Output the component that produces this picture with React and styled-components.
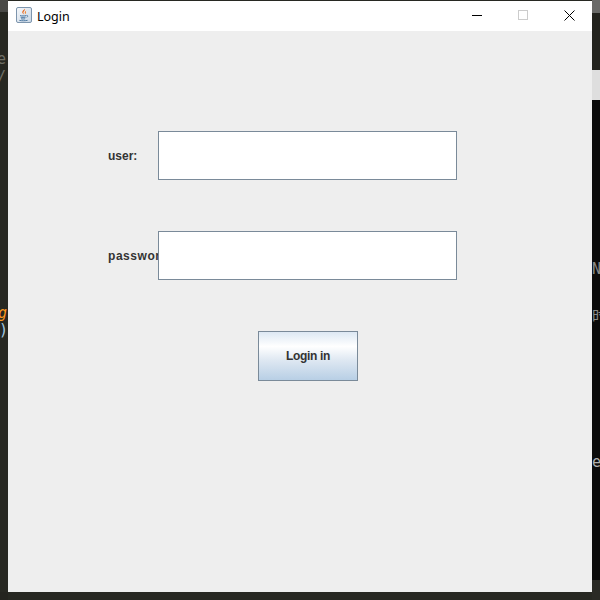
import React from 'react';
import styled, { createGlobalStyle } from 'styled-components';

const GlobalStyle = createGlobalStyle`
  html, body {
    margin: 0;
    padding: 0;
    width: 600px;
    height: 600px;
    overflow: hidden;
    background: #272822;
  }
`;

const Desktop = styled.div`
  width: 600px;
  height: 600px;
  display: grid;
  grid-template-columns: 8px 584px 8px;
  grid-template-rows: 600px;
  overflow: hidden;
  background: #272822;
`;

const LeftEditor = styled.div`
  display: flex;
  flex-direction: column;
  background: linear-gradient(#4a4a47 0 12px, #272822 12px 592px, #24241f 592px);
  overflow: hidden;
`;

const RightEditor = styled.div`
  display: flex;
  flex-direction: column;
  background: linear-gradient(
    #6a6a68 0 13px,
    #23231e 13px 70px,
    #dedede 70px 100px,
    #0c0c0c 100px 580px,
    #2a2a25 580px
  );
  overflow: hidden;
`;

const Glyph = styled.span`
  display: block;
  height: 18px;
  line-height: 18px;
  margin-top: ${(p) => p.$top}px;
  margin-left: ${(p) => p.$left || 0}px;
  font-family: "DejaVu Sans Mono", "Noto Sans CJK SC", monospace;
  font-size: 15px;
  font-style: ${(p) => (p.$italic ? 'italic' : 'normal')};
  color: ${(p) => p.$color};
  white-space: nowrap;
`;

const Frame = styled.div`
  margin-top: 1px;
  height: 591px;
  display: flex;
  flex-direction: column;
  background: #eeeeee;
`;

const TitleBar = styled.div`
  height: 30px;
  flex: none;
  display: flex;
  align-items: center;
  background: #ffffff;
  padding-left: 8px;
`;

const TitleIcon = styled.svg`
  flex: none;
  margin-bottom: 2px;
`;

const TitleText = styled.span`
  margin-left: 5px;
  font-family: "Noto Sans", sans-serif;
  font-size: 12.5px;
  color: #000000;
`;

const WindowControls = styled.div`
  margin-left: auto;
  display: flex;
  height: 30px;
`;

const ControlButton = styled.div`
  width: 46px;
  display: flex;
  align-items: center;
  justify-content: center;
  margin-bottom: 2px;
`;

const Content = styled.div`
  flex: 1;
  padding: 100px 0 0 100px;
  display: flex;
  flex-direction: column;
  gap: 51px;
`;

const FieldRow = styled.div`
  display: flex;
  align-items: center;
  height: 49px;
`;

const FieldLabel = styled.label`
  width: 50px;
  flex: none;
  overflow: hidden;
  white-space: nowrap;
  font-family: "Liberation Sans", Arial, sans-serif;
  font-size: 12px;
  font-weight: bold;
  letter-spacing: ${(p) => p.$spacing || 0}px;
  color: #333333;
`;

const TextInput = styled.input`
  box-sizing: border-box;
  width: 299px;
  height: 49px;
  margin: 0;
  padding: 0 3px;
  outline: none;
  background: #ffffff;
  border: 1px solid #7a8a99;
  border-radius: 0;
`;

const ButtonRow = styled.div`
  padding-left: 150px;
`;

const LoginButton = styled.button`
  box-sizing: border-box;
  display: block;
  width: 100px;
  height: 50px;
  margin: 0;
  padding: 0;
  border: 1px solid #7a8a99;
  border-radius: 0;
  background: linear-gradient(#dde8f3 0%, #ffffff 30%, #dfe8f2 58%, #b8cfe5 100%);
  font-family: "Liberation Sans", Arial, sans-serif;
  font-size: 12px;
  font-weight: bold;
  letter-spacing: -0.35px;
  color: #333333;
`;

function JavaIcon() {
  return (
    <TitleIcon width="16" height="16" viewBox="0 0 16 16">
      <defs>
        <linearGradient id="javaBg" x1="0" y1="0" x2="1" y2="1">
          <stop offset="0" stopColor="#f6f8fb" />
          <stop offset="1" stopColor="#c9d6e4" />
        </linearGradient>
      </defs>
      <rect x="0.5" y="0.5" width="15" height="15" rx="1.5" fill="url(#javaBg)" stroke="#7d95ad" />
      <path d="M8.8 1.8c1 1.6-2 2.6-1.3 4.4.2.5.5.9.7 1.3-1.7-.9-2.4-2.1-1.7-3.3.5-.9 1.8-1.3 2.3-2.4z" fill="#e8661b" />
      <path d="M10.4 3.6c-1.1.7-1.9 1.2-1.6 2.2.1.4.3.9.1 1.5 1-.7 1.5-1.3 1.1-2.1-.2-.5-.1-1 .4-1.6z" fill="#ee8a3a" />
      <path d="M4 8.6c1.6.4 4.6.4 6 0M4.6 10.2c1.4.3 3.6.3 5 0M5 11.8c1.2.3 3 .3 4.2 0M3.4 13.4c2.2.5 6 .5 8.2-.1M10.4 8.4c1.6-.3 2 1.2.2 1.9" fill="none" stroke="#4f7aa3" strokeWidth="1" />
    </TitleIcon>
  );
}

function MinimizeIcon() {
  return (
    <svg width="10" height="10" viewBox="0 0 10 10">
      <path d="M0 5.5H10" stroke="#000000" strokeWidth="1" />
    </svg>
  );
}

function MaximizeIcon() {
  return (
    <svg width="10" height="10" viewBox="0 0 10 10">
      <rect x="0.5" y="0.5" width="9" height="9" fill="none" stroke="#cccccc" />
    </svg>
  );
}

function CloseIcon() {
  return (
    <svg width="11" height="11" viewBox="0 0 11 11">
      <path d="M0.5 0.5L10.5 10.5M10.5 0.5L0.5 10.5" stroke="#000000" strokeWidth="1" />
    </svg>
  );
}

export default function App() {
  return (
    <>
      <GlobalStyle />
      <Desktop>
        <LeftEditor>
          <Glyph $top={50} $left={-3} $color="#6f6f66">e</Glyph>
          <Glyph $top={0} $left={-3} $color="#6f6f66">/</Glyph>
          <Glyph $top={218} $left={-2} $italic $color="#fd971f">g</Glyph>
          <Glyph $top={-1} $left={-1} $color="#a6c8e0">)</Glyph>
        </LeftEditor>
        <Frame>
          <TitleBar>
            <JavaIcon />
            <TitleText>Login</TitleText>
            <WindowControls>
              <ControlButton><MinimizeIcon /></ControlButton>
              <ControlButton><MaximizeIcon /></ControlButton>
              <ControlButton><CloseIcon /></ControlButton>
            </WindowControls>
          </TitleBar>
          <Content>
            <FieldRow>
              <FieldLabel>user:</FieldLabel>
              <TextInput type="text" />
            </FieldRow>
            <FieldRow>
              <FieldLabel $spacing={0.55}>password:</FieldLabel>
              <TextInput type="password" />
            </FieldRow>
            <ButtonRow>
              <LoginButton>Login in</LoginButton>
            </ButtonRow>
          </Content>
        </Frame>
        <RightEditor>
          <Glyph $top={260} $color="#8a8a8a">N</Glyph>
          <Glyph $top={29} $color="#8a8a8a">时</Glyph>
          <Glyph $top={128} $color="#b0b0b0">e</Glyph>
        </RightEditor>
      </Desktop>
    </>
  );
}
